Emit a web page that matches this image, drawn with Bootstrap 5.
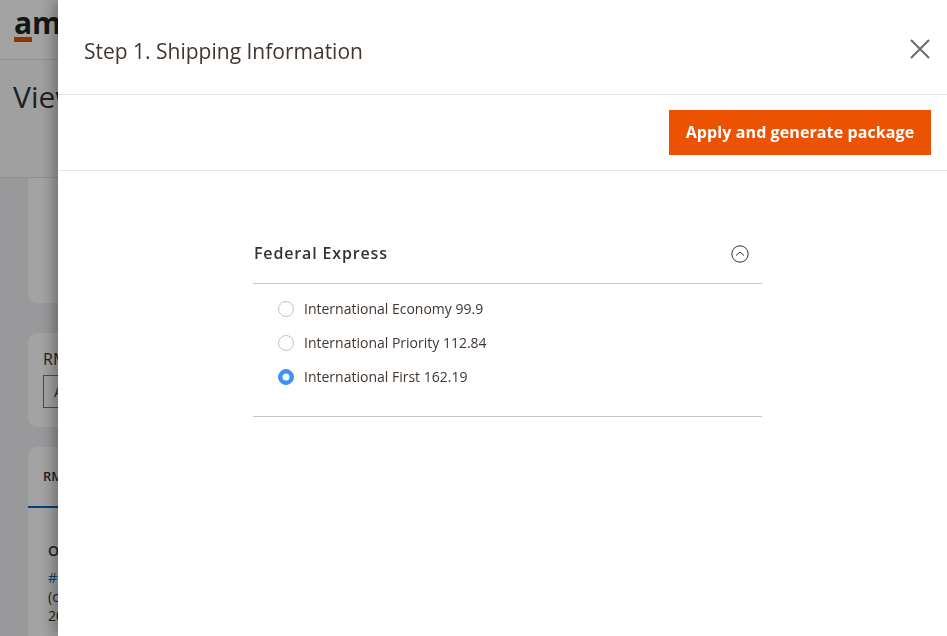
<!DOCTYPE html>
<html lang="en">
<head>
    <meta charset="UTF-8">
    <title>Step 1. Shipping Information</title>
    <meta name="viewport" content="width=device-width, initial-scale=1">
    <link href="https://cdn.jsdelivr.net/npm/bootstrap@5.3.0/dist/css/bootstrap.min.css" rel="stylesheet">
    <style>
        html, body { height: 100%; overflow: hidden; }
        body { font-family: "Open Sans", sans-serif; color: #333; background: #eff0f3; }

        /* page behind the panel */
        .page-head { background: #fbfbfb; height: 178px; border-bottom: 1px solid #e2e2e2; }
        .brand-bar { height: 60px; background: #fff; border-bottom: 1px solid #ddd; padding: 9px 0 0 14px; }
        .brand-word { display: block; font-size: 30px; font-weight: 700; line-height: 28px; color: #222; }
        .brand-line { display: block; width: 18px; height: 5px; background: #eb5202; }
        .page-title { font-size: 30px; line-height: 40px; margin: 17px 0 0 13px; font-weight: 400; }
        .page-body { padding-left: 28px; height: 458px; overflow: hidden; }
        .back-card { background: #fff; border-radius: 10px; }
        .back-one { height: 125px; border-radius: 0 0 0 10px; margin-bottom: 30px; }
        .back-two { height: 94px; margin-bottom: 20px; padding: 14px 15px; font-size: 16px; }
        .back-input { border: 1px solid #777; width: 60px; height: 33px; margin-top: 4px; padding: 5px 10px; font-size: 14px; }
        .back-tab { font-size: 13px; font-weight: 600; height: 61px; padding: 20px 15px; border-bottom: 2px solid #0b66c3; }
        .back-order { padding: 33px 20px; font-size: 14px; line-height: 19px; }
        .back-order a { color: #0b66c3; text-decoration: none; }

        .dim-layer { position: fixed; inset: 0; background: rgba(0, 0, 0, .36); }

        /* slide panel */
        .slide-panel { position: fixed; top: 0; bottom: 0; left: 58px; right: 0; background: #fff; box-shadow: -4px 0 14px rgba(0, 0, 0, .35); }
        .panel-top { height: 95px; border-bottom: 1px solid #e3e3e3; padding: 10px 16px 0 26px; }
        .panel-title { font-size: 21px; font-weight: 400; margin: 0; color: #41362f; }
        .panel-close { background: none; border: 0; padding: 0; margin-bottom: 6px; width: 22px; height: 22px; line-height: 0; }
        .panel-actions { height: 76px; border-bottom: 1px solid #e3e3e3; padding-right: 16px; }
        .btn-apply { background: #eb5202; color: #fff; border: 0; border-radius: 0; height: 45px; width: 262px; padding: 0 0 2px; font-size: 16px; font-weight: 700; letter-spacing: .1px; }
        .btn-apply:hover { background: #eb5202; color: #fff; }
        .panel-body { padding: 60px 185px 0 195px; }
        .carrier-head { height: 53px; border-bottom: 1px solid #c6c6c6; padding: 0 13px 6px 1px; }
        .carrier-name { font-size: 16px; font-weight: 600; letter-spacing: .85px; color: #333; margin: 0; }
        .carrier-rates { padding: 8px 0 22px 25px; border-bottom: 1px solid #c6c6c6; }
        .rate-row { height: 34px; margin: 0; padding: 0; gap: 10px; font-size: 14px; color: #41362f; }
        .rate-row span { margin-bottom: 2px; }
        .rate-row .form-check-input { width: 16px; height: 16px; margin: 0; float: none; border: 1px solid #c4c4c4; }
        .rate-row .form-check-input:checked { background-color: #3d94f6; border-color: #3d94f6; }
    </style>
</head>
<body>
    <!-- page behind -->
    <div class="page-head">
        <div class="brand-bar">
            <span class="brand-word">am</span>
            <span class="brand-line"></span>
        </div>
        <div class="page-title">View</div>
    </div>
    <div class="page-body">
        <div class="back-card back-one"></div>
        <div class="back-card back-two">
            <div>RMA</div>
            <div class="back-input">All</div>
        </div>
        <div class="back-card">
            <div class="back-tab">RMA</div>
            <div class="back-order">
                <div class="fw-semibold mb-2">Order</div>
                <a href="#">#0001</a><br>(complete)<br>2021
            </div>
        </div>
    </div>
    <div class="dim-layer"></div>

    <!-- slide panel -->
    <div class="slide-panel">
        <div class="panel-top d-flex align-items-center justify-content-between">
            <h1 class="panel-title">Step 1. Shipping Information</h1>
            <button class="panel-close" type="button" aria-label="Close">
                <svg width="22" height="22" viewBox="0 0 22 22"><path d="M2 2 L20 20 M20 2 L2 20" stroke="#6b6b6b" stroke-width="2" fill="none"/></svg>
            </button>
        </div>
        <div class="panel-actions d-flex align-items-center justify-content-end">
            <button class="btn btn-apply" type="button">Apply and generate package</button>
        </div>
        <div class="panel-body">
            <div class="carrier-head d-flex align-items-center justify-content-between">
                <h2 class="carrier-name">Federal Express</h2>
                <svg width="18" height="18" viewBox="0 0 18 18"><circle cx="9" cy="9" r="8.2" stroke="#333" stroke-width="1" fill="none"/><path d="M5 10.5 L9 7 L13 10.5" stroke="#333" stroke-width="1" fill="none"/></svg>
            </div>
            <div class="carrier-rates">
                <label class="form-check rate-row d-flex align-items-center">
                    <input class="form-check-input" type="radio" name="rate">
                    <span>International Economy 99.9</span>
                </label>
                <label class="form-check rate-row d-flex align-items-center">
                    <input class="form-check-input" type="radio" name="rate">
                    <span>International Priority 112.84</span>
                </label>
                <label class="form-check rate-row d-flex align-items-center">
                    <input class="form-check-input" type="radio" name="rate" checked>
                    <span>International First 162.19</span>
                </label>
            </div>
        </div>
    </div>
</body>
</html>
